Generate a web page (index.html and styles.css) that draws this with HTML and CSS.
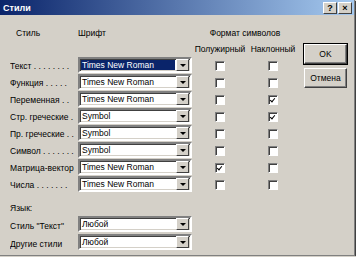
FILE: index.html
```html
<!DOCTYPE html>
<html lang="ru">
<head>
    <meta charset="UTF-8">
    <title>Стили</title>
    <link rel="stylesheet" href="styles.css">
</head>
<body>
    <div class="window">
        <div class="titlebar">
            <span class="title">Стили</span>
            <div class="title-buttons">
                <span class="tbtn">?</span>
                <span class="tbtn">&#215;</span>
            </div>
        </div>
        <div class="content">
            <div class="main">
                <div class="styles-grid">
                    <div class="head">Стиль</div>
                    <div class="head">Шрифт</div>
                    <div class="head fmt">Формат символов</div>

                    <div></div>
                    <div></div>
                    <div class="sub">Полужирный</div>
                    <div class="sub">Наклонный</div>

                    <div class="label">Текст . . . . . . . .</div>
                    <div class="combo"><span class="value selected">Times New Roman</span><span class="arrow"></span></div>
                    <div class="cell"><span class="check"></span></div>
                    <div class="cell"><span class="check"></span></div>

                    <div class="label">Функция . . . . .</div>
                    <div class="combo"><span class="value">Times New Roman</span><span class="arrow"></span></div>
                    <div class="cell"><span class="check"></span></div>
                    <div class="cell"><span class="check"></span></div>

                    <div class="label">Переменная . .</div>
                    <div class="combo"><span class="value">Times New Roman</span><span class="arrow"></span></div>
                    <div class="cell"><span class="check"></span></div>
                    <div class="cell"><span class="check checked"></span></div>

                    <div class="label">Стр. греческие .</div>
                    <div class="combo"><span class="value">Symbol</span><span class="arrow"></span></div>
                    <div class="cell"><span class="check"></span></div>
                    <div class="cell"><span class="check checked"></span></div>

                    <div class="label">Пр. греческие . .</div>
                    <div class="combo"><span class="value">Symbol</span><span class="arrow"></span></div>
                    <div class="cell"><span class="check"></span></div>
                    <div class="cell"><span class="check"></span></div>

                    <div class="label">Символ . . . . . . .</div>
                    <div class="combo"><span class="value">Symbol</span><span class="arrow"></span></div>
                    <div class="cell"><span class="check"></span></div>
                    <div class="cell"><span class="check"></span></div>

                    <div class="label">Матрица-вектор</div>
                    <div class="combo"><span class="value">Times New Roman</span><span class="arrow"></span></div>
                    <div class="cell"><span class="check checked"></span></div>
                    <div class="cell"><span class="check"></span></div>

                    <div class="label">Числа . . . . . . .</div>
                    <div class="combo"><span class="value">Times New Roman</span><span class="arrow"></span></div>
                    <div class="cell"><span class="check"></span></div>
                    <div class="cell"><span class="check"></span></div>
                </div>

                <div class="lang">Язык:</div>
                <div class="lang-grid">
                    <div class="label">Стиль "Текст"</div>
                    <div class="combo"><span class="value">Любой</span><span class="arrow"></span></div>
                    <div class="label">Другие стили</div>
                    <div class="combo"><span class="value">Любой</span><span class="arrow"></span></div>
                </div>
            </div>
            <div class="buttons">
                <button class="btn">OK</button>
                <button class="btn">Отмена</button>
            </div>
        </div>
    </div>
</body>
</html>
```

FILE: styles.css
```css
body {
    margin: 0;
    background: #d4d0c8;
    font-family: 'Liberation Sans', Arial, sans-serif;
    font-size: 8.5px;
    color: #000;
}
.window {
    width: 354px;
    height: 255px;
    background: #d4d0c8;
    border-right: 1px solid #808080;
    border-bottom: 1px solid #808080;
    box-shadow: 1px 1px 0 #404040;
    overflow: hidden;
}
.titlebar {
    height: 15px;
    display: flex;
    align-items: center;
    justify-content: space-between;
    background: linear-gradient(to right, #0a246a, #a6caf0);
    padding: 0 2px 0 3px;
}
.title {
    color: #fff;
    font-weight: bold;
    font-size: 9px;
}
.title-buttons {
    display: flex;
    gap: 1px;
}
.tbtn {
    width: 12px;
    height: 10px;
    background: #d4d0c8;
    border-top: 1px solid #fff;
    border-left: 1px solid #fff;
    border-right: 1px solid #404040;
    border-bottom: 1px solid #404040;
    font-size: 9px;
    font-weight: bold;
    line-height: 10px;
    text-align: center;
}
.content {
    display: flex;
    padding: 10px 0 0 10px;
}
.styles-grid {
    display: grid;
    grid-template-columns: 68px 114px 56px 50px;
    grid-auto-rows: 17px;
    grid-template-rows: 16px 16px;
    align-items: center;
}
.head {
    padding-left: 0;
}
.styles-grid .head:first-child {
    padding-left: 6px;
}
.fmt {
    grid-column: 3 / 5;
    text-align: center;
}
.sub {
    text-align: center;
}
.label {
    white-space: nowrap;
    overflow: hidden;
}
.combo {
    height: 12px;
    display: flex;
    align-items: center;
    background: #fff;
    border-top: 2px solid #808080;
    border-left: 2px solid #808080;
    border-right: 2px solid #fff;
    border-bottom: 2px solid #fff;
    box-shadow: inset 1px 1px 0 #404040, inset -1px -1px 0 #d4d0c8;
    align-self: start;
    padding-left: 1px;
}
.value {
    flex: 1;
    height: 10px;
    line-height: 10px;
    padding-left: 1px;
    white-space: nowrap;
}
.value.selected {
    background: #0a246a;
    color: #fff;
}
.arrow {
    width: 11px;
    height: 10px;
    margin: 0 1px;
    background: #d4d0c8;
    border-top: 1px solid #fff;
    border-left: 1px solid #fff;
    border-right: 1px solid #404040;
    border-bottom: 1px solid #404040;
    display: flex;
    align-items: center;
    justify-content: center;
}
.arrow::after {
    content: '';
    border-left: 3px solid transparent;
    border-right: 3px solid transparent;
    border-top: 3px solid #000;
}
.cell {
    display: flex;
    justify-content: center;
}
.check {
    width: 8px;
    height: 8px;
    background: #fff;
    border-top: 1px solid #808080;
    border-left: 1px solid #808080;
    border-right: 1px solid #fff;
    border-bottom: 1px solid #fff;
    box-shadow: inset 1px 1px 0 #404040;
    position: relative;
}
.check.checked::after {
    content: '';
    position: absolute;
    left: 2px;
    top: 1px;
    width: 2px;
    height: 4px;
    border-right: 1.5px solid #000;
    border-bottom: 1.5px solid #000;
    transform: rotate(40deg);
}
.lang {
    margin-top: 8px;
    height: 14px;
    line-height: 14px;
}
.lang-grid {
    display: grid;
    grid-template-columns: 68px 114px;
    grid-auto-rows: 18px;
    align-items: center;
    margin-top: 1px;
}
.lang-grid .label {
    padding-top: 1px;
}
.buttons {
    display: flex;
    flex-direction: column;
    gap: 4px;
    margin-left: 6px;
    padding-top: 19px;
}
.btn {
    width: 43px;
    height: 20px;
    padding: 0;
    background: #d4d0c8;
    font-family: 'Liberation Sans', Arial, sans-serif;
    font-size: 8.5px;
    color: #000;
    border-top: 1px solid #fff;
    border-left: 1px solid #fff;
    border-right: 1px solid #404040;
    border-bottom: 1px solid #404040;
    box-shadow: inset -1px -1px 0 #808080;
}
.btn:first-child {
    outline: 1px solid #000;
}
```
